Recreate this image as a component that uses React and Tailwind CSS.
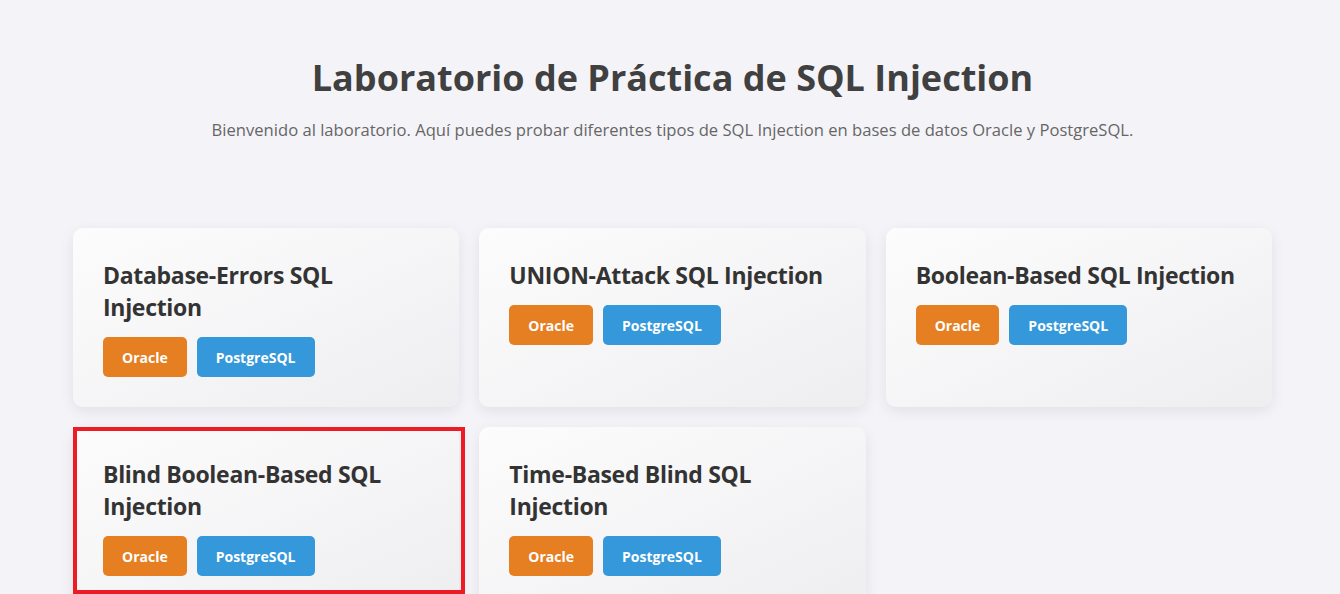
import React from "react";

const cards = [
  "Database-Errors SQL Injection",
  "UNION-Attack SQL Injection",
  "Boolean-Based SQL Injection",
  "Blind Boolean-Based SQL Injection",
  "Time-Based Blind SQL Injection",
];

function Card({ title, marked }) {
  return (
    <div className="relative rounded-[10px] bg-gradient-to-br from-[#fdfcfd] to-[#eeeef0] px-[30px] pb-[30px] pt-[31px] shadow-[0_4px_14px_rgba(0,0,0,0.08)]">
      <h3 className="mb-[14px] text-[23px] font-bold leading-[32px] tracking-[-0.3px] text-[#333]">{title}</h3>
      <div className="flex gap-[10px]">
        <button className="h-[40px] rounded-[5px] bg-[#e67e22] px-[19px] text-[14px] font-bold text-white">
          Oracle
        </button>
        <button className="h-[40px] rounded-[5px] bg-[#3498db] px-[19px] text-[14px] font-bold text-white">
          PostgreSQL
        </button>
      </div>
      {marked && (
        <div className="pointer-events-none absolute left-0 top-0 h-[167px] w-[392px] border-4 border-[#ed1c24]" />
      )}
    </div>
  );
}

export default function App() {
  return (
    <div
      className="min-h-[594px] overflow-hidden bg-[#f4f4f8] pl-[73px] pr-[68px] pt-[56px]"
      style={{ fontFamily: '"Open Sans", "Noto Sans", sans-serif' }}
    >
      <h1 className="text-center text-[36px] font-bold leading-[43px] text-[#404040]">
        Laboratorio de Práctica de SQL Injection
      </h1>
      <p className="mt-[19px] text-center text-[16.6px] leading-[24px] text-[#666]">
        Bienvenido al laboratorio. Aquí puedes probar diferentes tipos de SQL Injection en bases de datos Oracle y PostgreSQL.
      </p>
      <div className="mt-[86px] grid grid-cols-3 gap-[20px]">
        {cards.map((t, i) => (
          <Card key={t} title={t} marked={i === 3} />
        ))}
      </div>
    </div>
  );
}
